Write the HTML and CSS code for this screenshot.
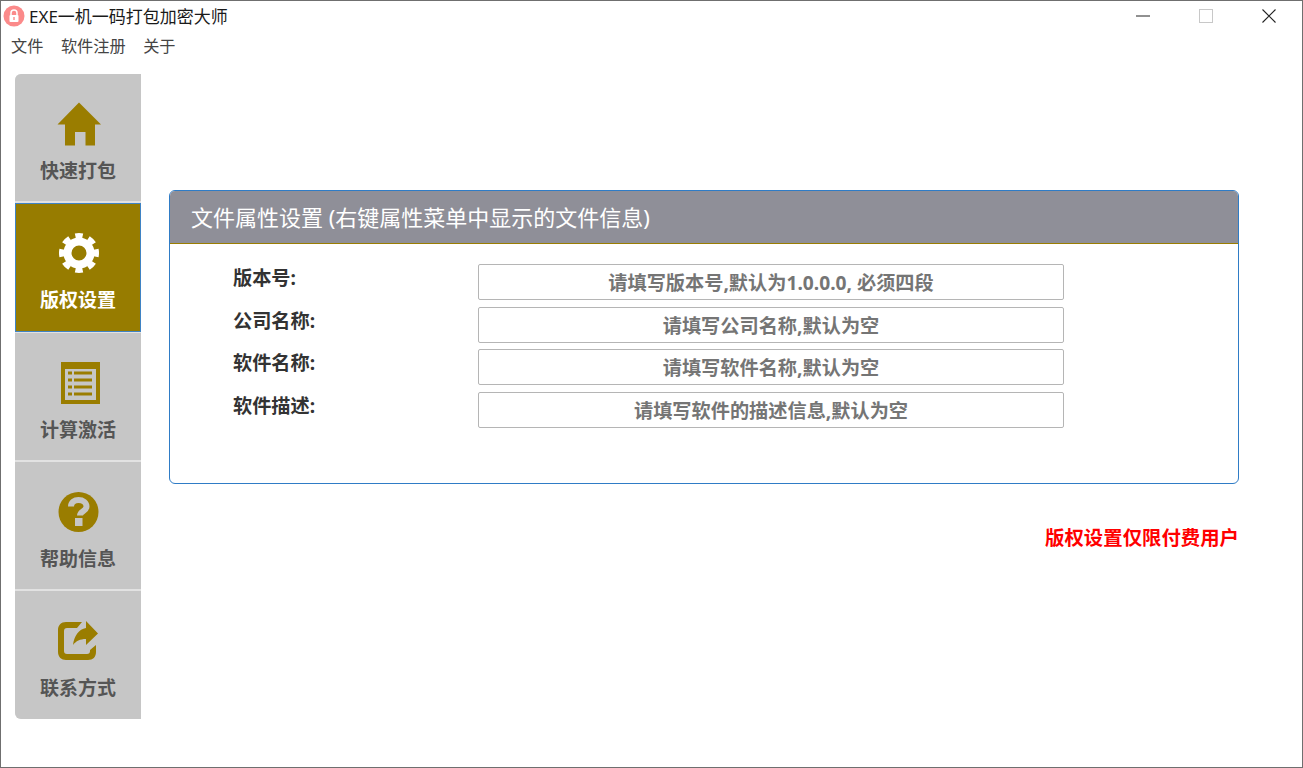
FILE: index.html
```html
<!DOCTYPE html>
<html lang="zh-CN">
<head>
<meta charset="utf-8">
<title>EXE一机一码打包加密大师</title>
<link rel="stylesheet" href="styles.css">
</head>
<body>
<div class="window">
  <header class="titlebar">
    <svg class="logo" viewBox="0 0 22 22" width="22" height="22">
      <circle cx="11" cy="11" r="10.5" fill="#fb8a8a"/>
      <path d="M8 10V8a3 3 0 0 1 6 0v2" fill="none" stroke="#fff" stroke-width="1.5"/>
      <rect x="6.5" y="10" width="9" height="7" rx="1" fill="#fff"/>
      <rect x="10.3" y="12" width="1.4" height="3" fill="#fb8a8a"/>
    </svg>
    <span class="app-title">EXE一机一码打包加密大师</span>
    <div class="controls">
      <svg class="ctl" viewBox="0 0 14 14" width="14" height="14"><path d="M0 7H14" stroke="#222" stroke-width="1"/></svg>
      <svg class="ctl" viewBox="0 0 14 14" width="14" height="14"><rect x=".5" y=".5" width="13" height="13" fill="none" stroke="#c8c8c8"/></svg>
      <svg class="ctl" viewBox="0 0 14 14" width="14" height="14"><path d="M.5.5L13.5 13.5M13.5.5L.5 13.5" stroke="#222" stroke-width="1.1"/></svg>
    </div>
  </header>
  <nav class="menubar">
    <span>文件</span><span>软件注册</span><span>关于</span>
  </nav>
  <div class="body">
    <aside class="sidebar">
      <a class="tab first">
        <svg class="icon" viewBox="0 0 46 46" width="46" height="46">
          <path d="M24 1.500L46 23.500H40V44.500H30.500V31H20V44.500H10V23.500H2.500Z" fill="#9a7d00"/>
        </svg>
        <span>快速打包</span>
      </a>
      <a class="tab active">
        <svg class="icon" viewBox="0 0 46 46" width="46" height="46">
          <circle cx="24" cy="23" r="11.5" fill="none" stroke="#fff" stroke-width="8"/>
          <circle cx="24" cy="23" r="17.5" fill="none" stroke="#fff" stroke-width="5" pathLength="80" stroke-dasharray="5.5 4.500" stroke-dashoffset="2.750"/>
        </svg>
        <span>版权设置</span>
      </a>
      <a class="tab">
        <svg class="icon" viewBox="0 0 46 46" width="46" height="46">
          <path fill-rule="evenodd" d="M6 2H45V44H6ZM10 9V40H41V9Z" fill="#9a7d00"/>
          <path d="M13 11.500h4v3h-4zM19 11.500h18v3H19zM13 18.500h4v3h-4zM19 18.500h18v3H19zM13 25.500h4v3h-4zM19 25.500h18v3H19zM13 32.500h4v3h-4zM19 32.500h18v3H19z" fill="#9a7d00"/>
        </svg>
        <span>计算激活</span>
      </a>
      <a class="tab">
        <svg class="icon" viewBox="0 0 46 46" width="46" height="46">
          <circle cx="23.500" cy="23" r="20" fill="#9a7d00"/>
          <path d="M16 17.500C16 13 19.500 11 23.500 11C28 11 31.500 13.500 31.500 17.500C31.500 22.500 25 22 25 26.500" fill="none" stroke="#c6c6c6" stroke-width="6"/>
          <rect x="20" y="29" width="7.500" height="8" fill="#c6c6c6"/>
        </svg>
        <span>帮助信息</span>
      </a>
      <a class="tab last">
        <svg class="icon" viewBox="0 0 46 46" width="46" height="46">
          <path d="M27 4H11C6 4 3 7.500 3 12V34C3 39 6.500 42 11 42H33C38 42 41 39 41 34V27L35 32V33C35 35 34 36 32 36H12C10 36 9 35 9 33V13C9 11 10 10 12 10H22Z" fill="#9a7d00"/>
          <path d="M31 3L43 15.500L31 27V21C25 21 21 23 18 27C19 18 24 11 31 10Z" fill="#9a7d00"/>
        </svg>
        <span>联系方式</span>
      </a>
    </aside>
    <main class="content">
      <section class="panel">
        <h2 class="panel-head">文件属性设置 (右键属性菜单中显示的文件信息)</h2>
        <div class="panel-body">
          <div class="row"><label>版本号:</label><div class="field">请填写版本号,默认为1.0.0.0, 必须四段</div></div>
          <div class="row"><label>公司名称:</label><div class="field">请填写公司名称,默认为空</div></div>
          <div class="row"><label>软件名称:</label><div class="field">请填写软件名称,默认为空</div></div>
          <div class="row"><label>软件描述:</label><div class="field">请填写软件的描述信息,默认为空</div></div>
        </div>
      </section>
      <p class="notice">版权设置仅限付费用户</p>
    </main>
  </div>
</div>
</body>
</html>
```
FILE: styles.css
```css
* { box-sizing: border-box; }
html, body { margin: 0; padding: 0; background: #fff; }
body { font-family: "Noto Sans", "Noto Sans CJK SC", sans-serif; overflow: hidden; }

.window {
  width: 1303px;
  height: 768px;
  border: 1px solid #6f6f6f;
  display: flex;
  flex-direction: column;
  background: #fff;
}

.titlebar {
  height: 30px;
  display: flex;
  align-items: center;
  padding-left: 2px;
  flex: none;
}
.logo { margin-right: 4px; }
.app-title { font-size: 17px; color: #1a1a1a; line-height: 1; }
.controls { margin-left: auto; display: flex; gap: 49px; margin-right: 26px; }
.ctl { display: block; }

.menubar {
  height: 28px;
  flex: none;
  display: flex;
  align-items: center;
  gap: 17.500px;
  padding-left: 10px;
  font-size: 16.200px;
  color: #444;
}

.body {
  flex: 1;
  display: flex;
  align-items: flex-start;
  padding: 15px 0 0 14px;
}

.sidebar {
  width: 126px;
  flex: none;
  display: flex;
  flex-direction: column;
  gap: 2px;
  background: #e2e2e2;
  border-radius: 6px 0 0 6px;
}
.tab {
  height: 127.300px;
  background: #c6c6c6;
  color: #555;
  display: flex;
  flex-direction: column;
  align-items: center;
  justify-content: flex-start;
  padding-top: 27px;
  font-size: 19px;
  font-weight: 700;
  line-height: 1;
}
.tab.first { border-radius: 6px 0 0 0; }
.tab.last { border-radius: 0 0 0 6px; }
.tab.active {
  height: 129px;
  margin: -0.500px 0 -1px;
  background: #977c00;
  color: #fff;
  border: 1px solid #3f83c4;
  padding-top: 26px;
}
.icon { display: block; margin-bottom: 15px; flex: none; }

.content {
  flex: 1;
  padding: 116px 63px 0 28px;
}

.panel {
  height: 294px;
  border: 1px solid #2f7cc6;
  border-radius: 6px;
  overflow: hidden;
}
.panel-head {
  margin: 0;
  height: 53px;
  background: #8f8f98;
  border-bottom: 1px solid #9a7d00;
  color: #fff;
  font-size: 22px;
  font-weight: 400;
  padding: 0 0 3px 21px;
  display: flex;
  align-items: center;
}
.panel-body {
  padding: 20px 174px 0 63px;
  display: flex;
  flex-direction: column;
  gap: 6.500px;
}
.row { display: flex; height: 36px; }
.row label {
  width: 245px;
  flex: none;
  font-size: 19.200px;
  font-weight: 700;
  color: #333;
  line-height: 28px;
}
.field {
  flex: 1;
  border: 1px solid #b5b5b5;
  border-radius: 2px;
  text-align: center;
  font-size: 19.200px;
  font-weight: 700;
  color: #757575;
  line-height: 35px;
}

.notice {
  margin: 40px 0 0;
  text-align: right;
  color: #f00;
  font-size: 19.400px;
  font-weight: 700;
  line-height: 28px;
}
```
